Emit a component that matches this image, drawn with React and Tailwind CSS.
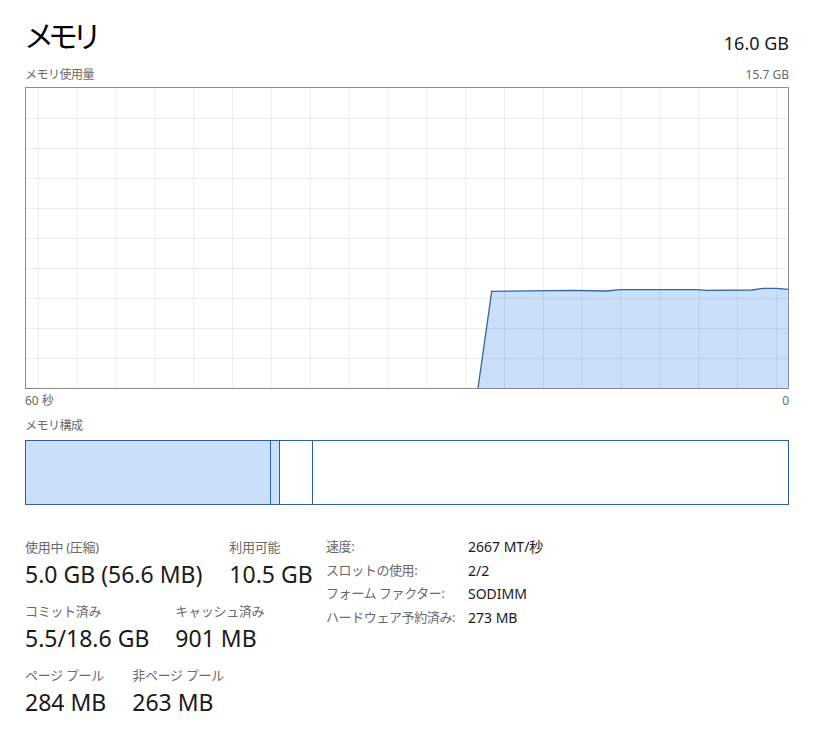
const font = { fontFamily: '"Noto Sans", "Noto Sans CJK JP", sans-serif' };

const area = [
  [452, 300], [465.7, 203.3], [547, 202.3], [580.7, 203], [594, 201.7],
  [670.7, 201.7], [680.7, 202.3], [725.7, 202], [737.3, 200.3],
  [750.7, 200.3], [762, 201.3], [762, 300],
];

function UsageChart() {
  const vLines = Array.from({ length: 20 }, (_, i) => 12.3 + i * 38.85);
  const hLines = Array.from({ length: 9 }, (_, i) => 30 + i * 30);
  const pts = area.map((p) => p.join(",")).join(" ");
  const line = area.slice(0, -1).map((p) => p.join(",")).join(" ");
  return (
    <div className="w-[764px] h-[302px] border border-[#8c8c8c] bg-white">
      <svg width="762" height="300" className="block">
        <polygon points={pts} fill="#c9dffa" />
        {vLines.map((x) => (
          <line key={x} x1={x} y1="0" x2={x} y2="300" stroke="rgba(0,0,0,0.07)" strokeWidth="1" />
        ))}
        {hLines.map((y) => (
          <line key={y} x1="0" y1={y + 0.5} x2="762" y2={y + 0.5} stroke="rgba(0,0,0,0.07)" strokeWidth="1" />
        ))}
        <polyline points={line} fill="none" stroke="#3366a3" strokeWidth="1.3" />
      </svg>
    </div>
  );
}

function CompositionBar() {
  return (
    <div className="flex w-[764px] h-[65px] border border-[#2f5f98] bg-white">
      <div className="w-[245px] bg-[#c9dffa] border-r border-[#2f5f98]" />
      <div className="w-[9px] bg-[#c9dffa] border-r border-[#2f5f98]" />
      <div className="w-[33px] border-r border-[#2f5f98]" />
      <div className="flex-1" />
    </div>
  );
}

function Stat({ label, value }) {
  return (
    <div className="flex flex-col">
      <div className="text-[13px] leading-[18px] text-[#6a6a6a] tracking-[-0.3px]">{label}</div>
      <div className="mt-[4px] text-[23px] leading-[29px] text-[#1a1a1a]">{value}</div>
    </div>
  );
}

export default function App() {
  const specs = [
    ["速度:", "2667 MT/秒"],
    ["スロットの使用:", "2/2"],
    ["フォーム ファクター:", "SODIMM"],
    ["ハードウェア予約済み:", "273 MB"],
  ];
  return (
    <div className="w-[817px] h-[743px] bg-white pl-[25px] pt-[18px]" style={font}>
      <div className="flex w-[764px] justify-between items-start">
        <div className="-ml-[1px] text-[30px] leading-[36px] tracking-[-6px] text-black">メモリ</div>
        <div className="mt-[13px] text-[18px] leading-[24px] text-[#1a1a1a]">16.0 GB</div>
      </div>
      <div className="mt-[12px] flex w-[764px] justify-between text-[12px] leading-[16px] text-[#6a6a6a]">
        <span className="tracking-[-0.5px]">メモリ使用量</span>
        <span>15.7 GB</span>
      </div>
      <div className="mt-[4px]">
        <UsageChart />
      </div>
      <div className="mt-[4px] flex w-[764px] justify-between text-[12px] leading-[16px] text-[#6a6a6a]">
        <span>60 秒</span>
        <span>0</span>
      </div>
      <div className="mt-[9px] text-[12px] leading-[16px] text-[#6a6a6a] tracking-[-0.5px]">メモリ構成</div>
      <div className="mt-[6px]">
        <CompositionBar />
      </div>
      <div className="mt-[30px] flex items-start">
        <div className="w-[301px] pt-[3px] flex flex-col gap-[13px]">
          <div className="flex gap-[27px]">
            <Stat label="使用中 (圧縮)" value="5.0 GB (56.6 MB)" />
            <Stat label="利用可能" value="10.5 GB" />
          </div>
          <div className="flex gap-[26px]">
            <Stat label="コミット済み" value="5.5/18.6 GB" />
            <Stat label="キャッシュ済み" value="901 MB" />
          </div>
          <div className="flex gap-[26px]">
            <Stat label="ページ プール" value="284 MB" />
            <Stat label="非ページ プール" value="263 MB" />
          </div>
        </div>
        <div className="grid grid-cols-[142px_auto] content-start leading-[23.7px]">
          {specs.map(([k, v]) => (
            <div key={k} className="contents">
              <span className="text-[13px] text-[#6a6a6a] tracking-[-0.4px]">{k}</span>
              <span className="text-[14px] text-[#1a1a1a]">{v}</span>
            </div>
          ))}
        </div>
      </div>
    </div>
  );
}
